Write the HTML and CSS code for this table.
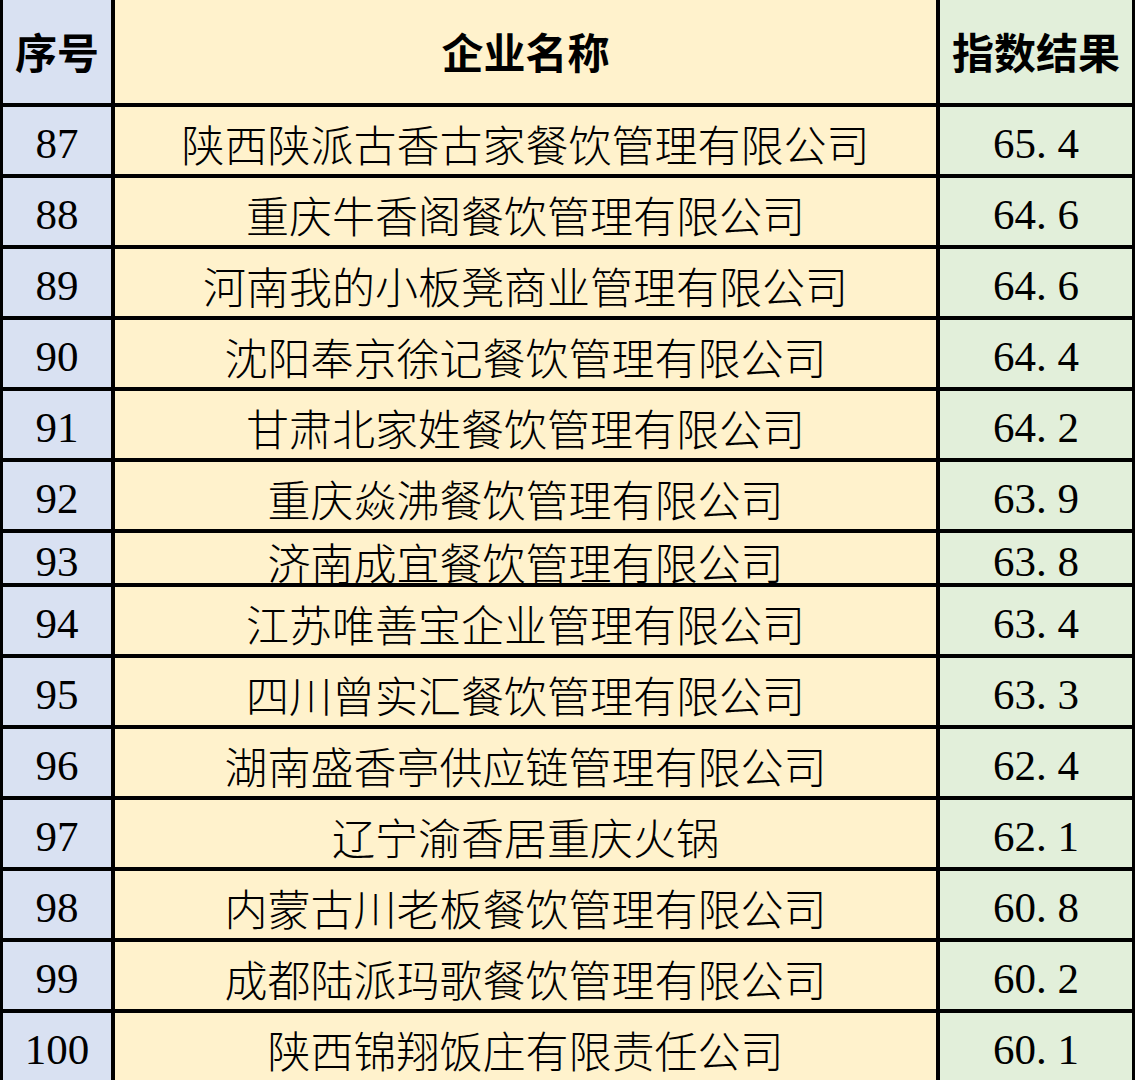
FILE: index.html
```html
<!DOCTYPE html>
<html lang="zh-CN">
<head>
<meta charset="utf-8">
<title>企业指数结果</title>
<link rel="stylesheet" href="styles.css">
</head>
<body>
<div class="sheet">
  <div class="cell c1 head">序号</div>
  <div class="cell c2 head">企业名称</div>
  <div class="cell c3 head">指数结果</div>

  <div class="cell c1 num">87</div>
  <div class="cell c2 name">陕西陕派古香古家餐饮管理有限公司</div>
  <div class="cell c3 num">65<span class="dot">.</span>4</div>

  <div class="cell c1 num">88</div>
  <div class="cell c2 name">重庆牛香阁餐饮管理有限公司</div>
  <div class="cell c3 num">64<span class="dot">.</span>6</div>

  <div class="cell c1 num">89</div>
  <div class="cell c2 name">河南我的小板凳商业管理有限公司</div>
  <div class="cell c3 num">64<span class="dot">.</span>6</div>

  <div class="cell c1 num">90</div>
  <div class="cell c2 name">沈阳奉京徐记餐饮管理有限公司</div>
  <div class="cell c3 num">64<span class="dot">.</span>4</div>

  <div class="cell c1 num">91</div>
  <div class="cell c2 name">甘肃北家姓餐饮管理有限公司</div>
  <div class="cell c3 num">64<span class="dot">.</span>2</div>

  <div class="cell c1 num">92</div>
  <div class="cell c2 name">重庆焱沸餐饮管理有限公司</div>
  <div class="cell c3 num">63<span class="dot">.</span>9</div>

  <div class="cell c1 num">93</div>
  <div class="cell c2 name">济南成宜餐饮管理有限公司</div>
  <div class="cell c3 num">63<span class="dot">.</span>8</div>

  <div class="cell c1 num">94</div>
  <div class="cell c2 name">江苏唯善宝企业管理有限公司</div>
  <div class="cell c3 num">63<span class="dot">.</span>4</div>

  <div class="cell c1 num">95</div>
  <div class="cell c2 name">四川曾实汇餐饮管理有限公司</div>
  <div class="cell c3 num">63<span class="dot">.</span>3</div>

  <div class="cell c1 num">96</div>
  <div class="cell c2 name">湖南盛香亭供应链管理有限公司</div>
  <div class="cell c3 num">62<span class="dot">.</span>4</div>

  <div class="cell c1 num">97</div>
  <div class="cell c2 name">辽宁渝香居重庆火锅</div>
  <div class="cell c3 num">62<span class="dot">.</span>1</div>

  <div class="cell c1 num">98</div>
  <div class="cell c2 name">内蒙古川老板餐饮管理有限公司</div>
  <div class="cell c3 num">60<span class="dot">.</span>8</div>

  <div class="cell c1 num">99</div>
  <div class="cell c2 name">成都陆派玛歌餐饮管理有限公司</div>
  <div class="cell c3 num">60<span class="dot">.</span>2</div>

  <div class="cell c1 num">100</div>
  <div class="cell c2 name">陕西锦翔饭庄有限责任公司</div>
  <div class="cell c3 num">60<span class="dot">.</span>1</div>
</div>
</body>
</html>
```

FILE: styles.css
```css
html, body {
  margin: 0;
  padding: 0;
  background: #000;
}

body {
  width: 1135px;
  height: 1080px;
  overflow: hidden;
}

.sheet {
  display: grid;
  grid-template-columns: 108px 821px 192px;
  grid-template-rows: 103px repeat(6, 67px) 50px repeat(7, 67px);
  column-gap: 4px;
  row-gap: 4px;
  padding: 0 3px;
  background: #000;
}

.cell {
  display: flex;
  align-items: center;
  justify-content: center;
  color: #000;
  white-space: nowrap;
  line-height: 1;
}

.c1 { background: #d9e1f2; }
.c2 { background: #fff2cc; }
.c3 { background: #e2efda; }

.head {
  font-family: "Noto Sans CJK SC", "Noto Sans", sans-serif;
  font-weight: 700;
  font-size: 42px;
  padding-bottom: 2px;
}

.name {
  font-family: "Noto Sans CJK SC", "Noto Sans", sans-serif;
  font-weight: 300;
  font-size: 43px;
  padding-top: 6px;
}

.num {
  font-family: "Liberation Serif", "Times New Roman", serif;
  font-size: 43px;
  padding-top: 6px;
}

.dot {
  display: inline-block;
  width: 0.5em;
  text-align: left;
}
```
